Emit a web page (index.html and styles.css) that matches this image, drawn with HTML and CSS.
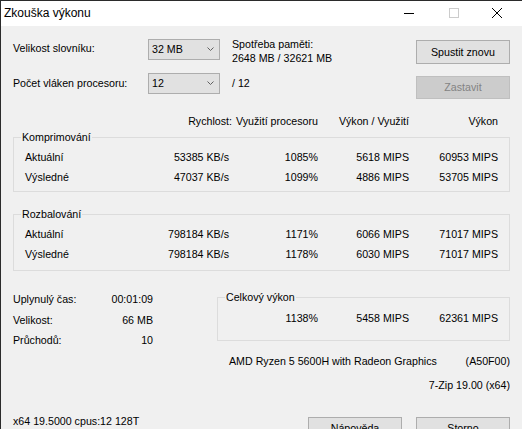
FILE: index.html
```html
<!DOCTYPE html>
<html lang="cs">
<head>
<meta charset="utf-8">
<title>Zkouška výkonu</title>
<link rel="stylesheet" href="styles.css">
</head>
<body>
<div class="window">
  <div class="titlebar">
    <span class="title">Zkouška výkonu</span>
    <div class="caption">
      <span class="cap cap-min"><svg width="10" height="10" viewBox="0 0 10 10"><line x1="0" y1="5.5" x2="10" y2="5.5" stroke="#000" stroke-width="1"/></svg></span>
      <span class="cap cap-max"><svg width="10" height="10" viewBox="0 0 10 10"><rect x="0.5" y="0.5" width="9" height="9" fill="none" stroke="#cccccc" stroke-width="1"/></svg></span>
      <span class="cap cap-close"><svg width="10" height="10" viewBox="0 0 10 10"><path d="M0 0 L10 10 M10 0 L0 10" stroke="#000" stroke-width="1" fill="none"/></svg></span>
    </div>
  </div>
  <div class="body">
    <div class="top">
      <div class="lbl lbl1">Velikost slovníku:</div>
      <div class="combo combo1"><span>32 MB</span><svg width="7" height="4" viewBox="0 0 7 4"><polyline points="0.5,0.5 3.5,3.5 6.5,0.5" fill="none" stroke="#606060" stroke-width="1"/></svg></div>
      <div class="mem">Spotřeba paměti:<br>2648 MB / 32621 MB</div>
      <div class="btn btn-top1">Spustit znovu</div>
      <div class="lbl lbl2">Počet vláken procesoru:</div>
      <div class="combo combo2"><span>12</span><svg width="7" height="4" viewBox="0 0 7 4"><polyline points="0.5,0.5 3.5,3.5 6.5,0.5" fill="none" stroke="#606060" stroke-width="1"/></svg></div>
      <div class="threads">/ 12</div>
      <div class="btn btn-disabled btn-top2">Zastavit</div>
    </div>

    <div class="cols header">
      <span></span>
      <span class="r h-speed">Rychlost:</span>
      <span class="r">Využití procesoru</span>
      <span class="r">Výkon / Využití</span>
      <span class="r">Výkon</span>
    </div>

    <fieldset class="group">
      <legend>Komprimování</legend>
      <div class="cols rows">
        <span>Aktuální</span><span class="r">53385 KB/s</span><span class="r">1085%</span><span class="r">5618 MIPS</span><span class="r">60953 MIPS</span>
        <span>Výsledné</span><span class="r">47037 KB/s</span><span class="r">1099%</span><span class="r">4886 MIPS</span><span class="r">53705 MIPS</span>
      </div>
    </fieldset>

    <fieldset class="group group2">
      <legend>Rozbalování</legend>
      <div class="cols rows">
        <span>Aktuální</span><span class="r">798184 KB/s</span><span class="r">1171%</span><span class="r">6066 MIPS</span><span class="r">71017 MIPS</span>
        <span>Výsledné</span><span class="r">798184 KB/s</span><span class="r">1178%</span><span class="r">6030 MIPS</span><span class="r">71017 MIPS</span>
      </div>
    </fieldset>

    <div class="bottom">
      <div class="stats">
        <span>Uplynulý čas:</span><span class="r">00:01:09</span>
        <span>Velikost:</span><span class="r">66 MB</span>
        <span>Průchodů:</span><span class="r">10</span>
      </div>
      <div class="summary">
        <fieldset class="group total">
          <legend>Celkový výkon</legend>
          <div class="tcols">
            <span></span><span class="r">1138%</span><span class="r">5458 MIPS</span><span class="r">62361 MIPS</span>
          </div>
        </fieldset>
        <div class="cpu"><span>AMD Ryzen 5 5600H with Radeon Graphics</span><span>(A50F00)</span></div>
        <div class="ver">7-Zip 19.00 (x64)</div>
      </div>
    </div>

    <div class="footer">
      <span class="sys">x64 19.5000 cpus:12 128T</span>
      <div class="fbtns">
        <div class="btn">Nápověda</div>
        <div class="btn">Storno</div>
      </div>
    </div>
  </div>
</div>
</body>
</html>
```
FILE: styles.css
```css
* { box-sizing: border-box; }

body {
  margin: 0;
  background: #f0f0f0;
  font-family: "Liberation Sans", Arial, sans-serif;
  font-size: 10.67px;
  color: #000;
}

.window {
  width: 522px;
  height: 429px;
  overflow: hidden;
  border-left: 1px solid #2b2b2b;
  border-top: 1px solid #2b2b2b;
  background: #f0f0f0;
  display: flex;
  flex-direction: column;
}

.titlebar {
  flex: none;
  height: 25px;
  background: #fff;
  display: flex;
  align-items: center;
}

.title {
  flex: 1;
  font-size: 12px;
  padding-left: 3px;
  padding-bottom: 2px;
}

.caption {
  display: flex;
  margin-right: 4px;
}

.cap {
  height: 25px;
  display: flex;
  align-items: center;
  justify-content: center;
  padding-bottom: 1px;
}

.cap-min { width: 45px; }
.cap-max { width: 45px; }
.cap-close { width: 42px; }

.body {
  flex: 1;
  min-height: 0;
  padding: 0 12px;
  display: flex;
  flex-direction: column;
}

.top {
  margin-top: 13px;
  display: grid;
  grid-template-columns: 135px 84px 184px 94px;
  grid-template-rows: 34px 27px;
  line-height: 13px;
}

.lbl { padding-top: 3px; }
.lbl2 { padding-top: 4px; }

.combo {
  width: 72px;
  height: 21px;
  background: #e1e1e1;
  border: 1px solid #adadad;
  display: flex;
  align-items: center;
  justify-content: space-between;
  padding: 0 5px 0 3px;
  line-height: 19px;
}

.combo svg { margin-bottom: 1px; }

.mem {
  margin-top: -2px;
  line-height: 14px;
}

.threads { padding-top: 4px; }

.btn {
  width: 94px;
  height: 24px;
  background: #e1e1e1;
  border: 1px solid #adadad;
  text-align: center;
  line-height: 22px;
}

.btn-top1 { margin-top: 1px; }
.btn-top2 { margin-top: 3px; height: 23px; line-height: 21px; }

.btn-disabled {
  background: #cccccc;
  border-color: #bfbfbf;
  color: #838383;
}

.cols {
  display: grid;
  grid-template-columns: 1fr 90px 89px 91px 89px;
}

.r { text-align: right; white-space: nowrap; }

.header {
  margin-top: 15px;
  padding: 0 12px;
  line-height: 13px;
}

.h-speed { margin-right: -3px; }

.group {
  margin: 3px 0 0;
  padding: 0 0 4px;
  border: 1px solid #dcdcdc;
  min-width: 0;
}

.group legend {
  margin-left: 7px;
  padding: 0 1px;
  line-height: 13px;
}

.group2 { margin-top: 16px; padding-bottom: 6px; }

.rows {
  padding: 3px 11px 0;
  line-height: 20px;
}

.bottom {
  display: flex;
  margin-top: 18px;
}

.stats {
  width: 140px;
  margin-right: 64px;
  display: grid;
  grid-template-columns: 1fr auto;
  grid-auto-rows: 20.5px;
  line-height: 20px;
  align-content: start;
}

.summary {
  flex: 1;
  margin-top: 2px;
}

.total { margin-top: 0; padding-bottom: 12px; }

.tcols {
  display: grid;
  grid-template-columns: 1fr 89px 91px 89px;
  padding: 4px 11px 0;
  line-height: 20px;
}

.cpu {
  display: flex;
  justify-content: space-between;
  padding-left: 12px;
  margin-top: 10px;
  line-height: 20px;
}

.ver {
  text-align: right;
  margin-top: 4px;
  line-height: 20px;
}

.footer {
  flex: none;
  display: flex;
  justify-content: space-between;
  align-items: flex-start;
  margin-top: 16px;
}

.sys { line-height: 20px; }

.fbtns {
  display: flex;
  gap: 14px;
  margin-top: 6px;
}

.fbtns .btn { height: 23px; line-height: 21px; }
```
